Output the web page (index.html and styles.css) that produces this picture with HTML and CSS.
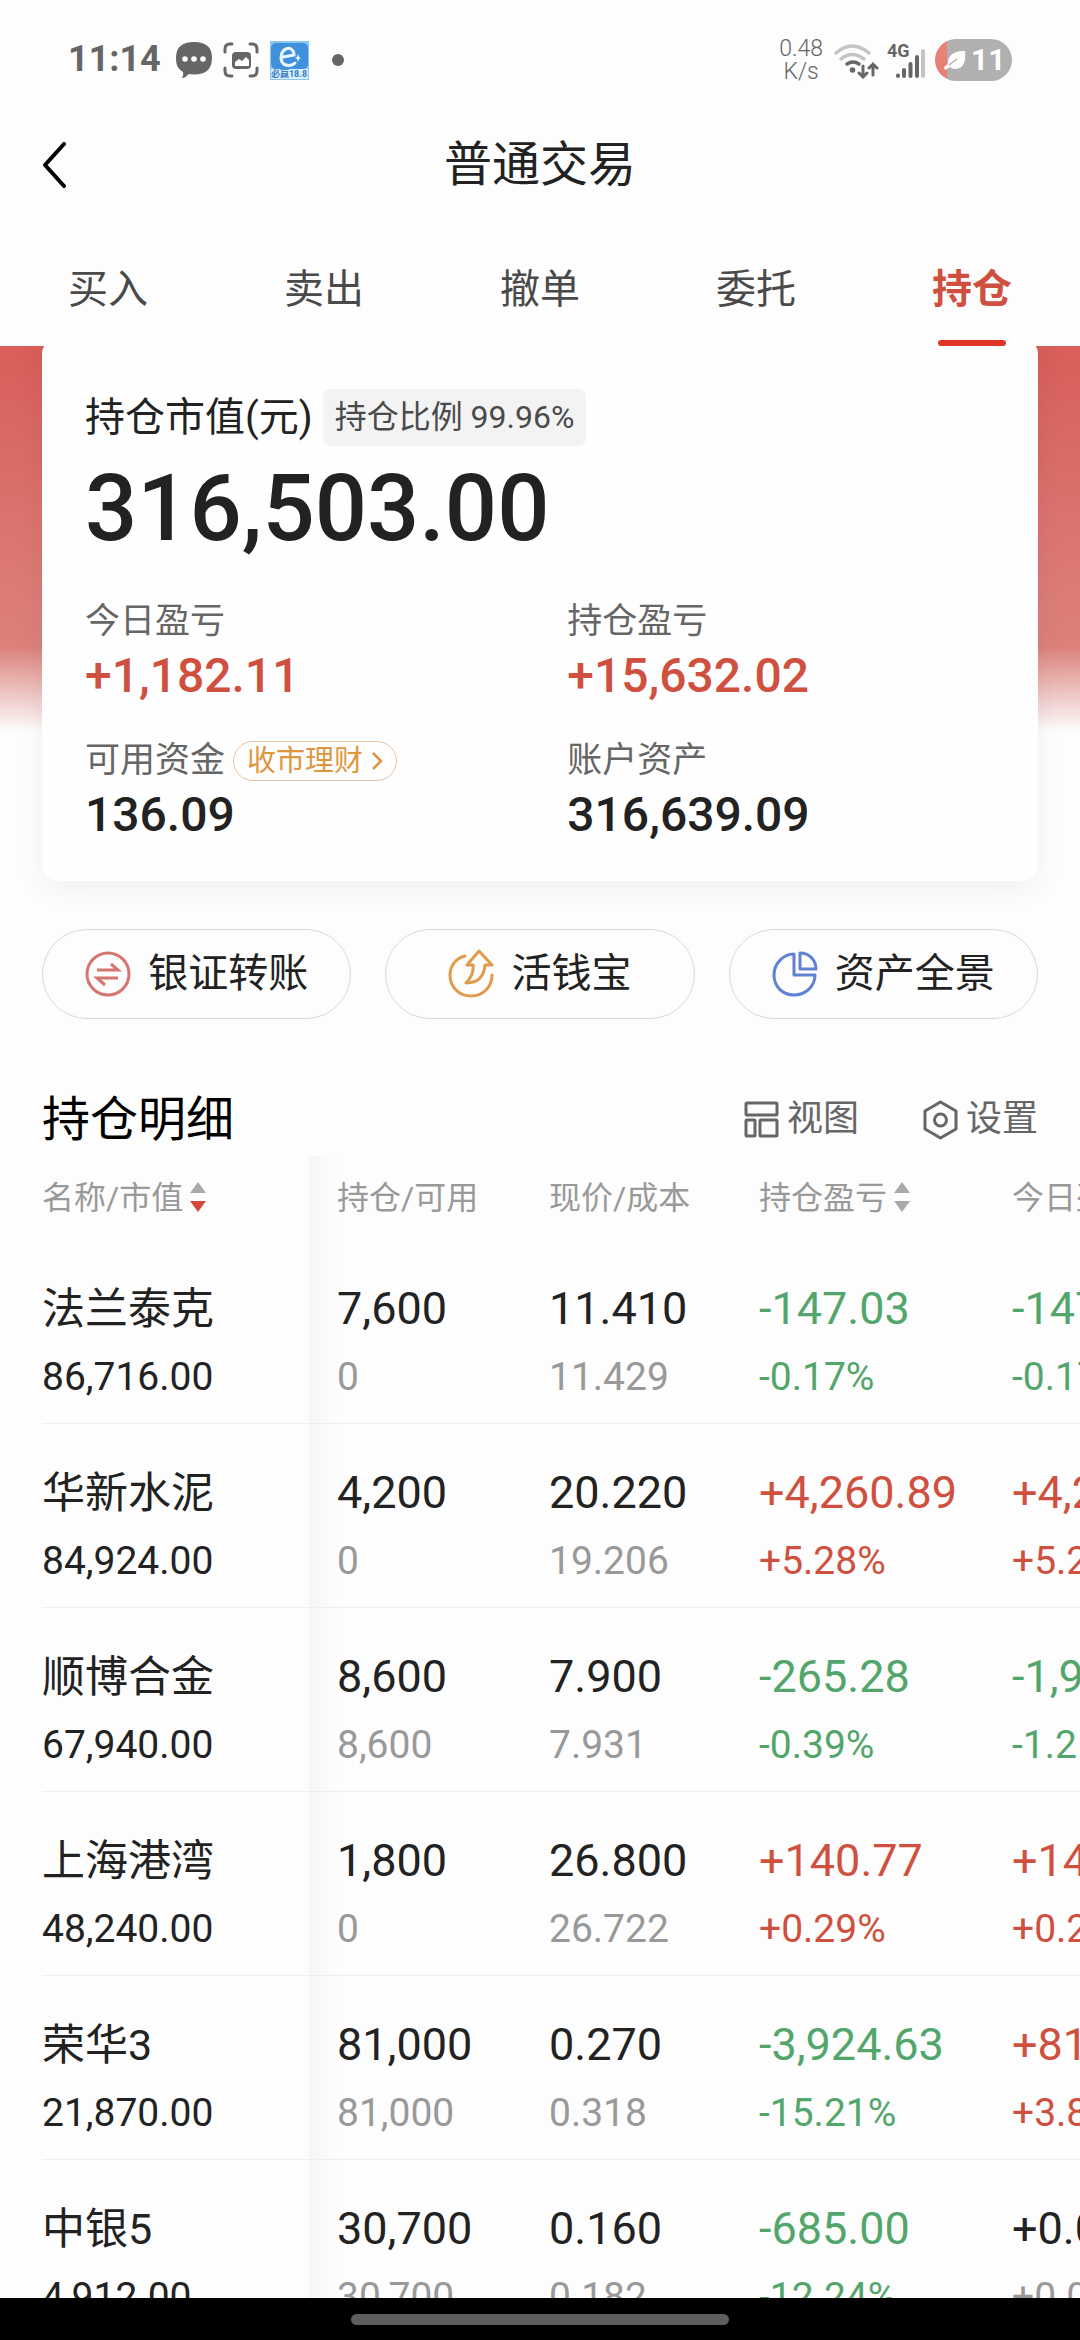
FILE: index.html
```html
<!DOCTYPE html>
<html lang="zh-CN">
<head>
  <meta charset="UTF-8">
  <meta name="viewport" content="width=device-width, initial-scale=1">
  <title>普通交易</title>
  <link rel="stylesheet" href="styles.css">
</head>
<body>
  <div class="status-bar">
    <div class="status-left">
      <span class="time">11:14</span>
      <svg class="status-icon" width="36" height="38" viewBox="0 0 36 38">
        <path fill="#666" d="M18 1C30 1 36 6 36 17S30 33.500 18 33.500c-2 0-4-.2-5.500-.5C11 35 9 37 6 37c1-1.500 1.500-4 1-6C2 28 0 24 0 17 0 6 6 1 18 1z"/>
        <g fill="#fff"><circle cx="9" cy="18" r="2.800"/><circle cx="18" cy="18" r="2.800"/><circle cx="27" cy="18" r="2.800"/></g>
      </svg>
      <svg class="status-icon" width="36" height="38" viewBox="0 0 36 38">
        <path fill="none" stroke="#666" stroke-width="3" stroke-linecap="round" d="M2 11V8q0-5 5-5h2M27 3h2q5 0 5 5v3M34 27v3q0 5-5 5h-2M9 35H7q-5 0-5-5v-3"/>
        <rect x="9" y="11" width="19" height="17" rx="4" fill="#666"/>
        <path fill="#fff" d="M12 25v-4l4-3 3 2 4-4 3 3v6z"/>
      </svg>
      <svg class="status-icon app" width="39" height="39" viewBox="0 0 39 39">
        <rect width="39" height="39" fill="#8cc6f3"/>
        <rect x="1" y="2" width="37" height="26" rx="5" fill="#3f90dd"/>
        <path d="M1 28h37v10H1z" fill="#d9effc"/>
        <path d="M13 16l11-2c0-5-4-8-8-6-5 2-6 9-4 13 3 5 10 4 13 1" fill="none" stroke="#e8f6ff" stroke-width="3" stroke-linecap="round"/>
        <path d="M28 13l1 3 2 1-2 1-1 3-1-3-2-1 2-1z" fill="#e8f6ff"/>
        <text x="19" y="36" text-anchor="middle" class="app-label">必赢18.8</text>
      </svg>
      <span class="dot"></span>
    </div>
    <div class="status-right">
      <div class="speed">0.48<br>K/s</div>
      <svg width="46" height="38" viewBox="0 0 46 38">
        <g fill="none" stroke-width="3.500" stroke-linecap="round">
          <path stroke="#c4c4c4" d="M3 12q16-14 33 0M8 18q11-9 23 0"/>
          <path stroke="#666" d="M14 23q6-4 12 0"/>
          <path stroke="#666" stroke-width="3" d="M30 25v10M26 32l4 4 4-4M40 34V23M36 27l4-4 4 4"/>
        </g>
        <circle cx="19.500" cy="29" r="2.800" fill="#666"/>
      </svg>
      <svg width="40" height="38" viewBox="0 0 40 38">
        <text x="0" y="16" class="net-label">4G</text>
        <g stroke="#666" stroke-width="4" stroke-linecap="round">
          <path d="M11 34.500v.5M17 29v6M23.500 23v12M30 16v19"/>
          <path stroke="#c4c4c4" d="M36 10v25"/>
        </g>
      </svg>
      <div class="battery">
        <svg width="22" height="22" viewBox="0 0 22 22">
          <path fill="#fff" d="M21 2c1 10-1 17-9 18-3 0-5-1-6-2l-5 3-1-3 4-3C3 7 10 1 21 2z"/>
          <path stroke="#b0b0b0" stroke-width="1.500" d="M5 16l8-6" fill="none"/>
        </svg>
        <span>11</span>
      </div>
    </div>
  </div>

  <header class="title-bar">
    <button class="back" aria-label="返回">
      <svg width="24" height="46" viewBox="0 0 24 46"><path d="M22 2L3 23l19 21" fill="none" stroke="#000" stroke-width="4" stroke-linecap="round" stroke-linejoin="round"/></svg>
    </button>
    <h1>普通交易</h1>
  </header>

  <nav class="tabs">
    <a href="#buy">买入</a>
    <a href="#sell">卖出</a>
    <a href="#cancel">撤单</a>
    <a href="#orders">委托</a>
    <a href="#positions" class="active">持仓</a>
  </nav>

  <main>
    <section class="hero">
      <div class="card">
        <div class="card-head">
          <span class="card-label">持仓市值(元)</span>
          <span class="ratio">持仓比例 99.96%</span>
        </div>
        <div class="total">316,503.00</div>
        <div class="stats">
          <div>
            <div class="stat-label">今日盈亏</div>
            <div class="stat-value up">+1,182.11</div>
          </div>
          <div>
            <div class="stat-label">持仓盈亏</div>
            <div class="stat-value up">+15,632.02</div>
          </div>
          <div>
            <div class="stat-label">可用资金
              <button class="chip">收市理财
                <svg width="12" height="20" viewBox="0 0 12 20"><path d="M2 2l8 8-8 8" fill="none" stroke="#e0963f" stroke-width="2.500"/></svg>
              </button>
            </div>
            <div class="stat-value">136.09</div>
          </div>
          <div>
            <div class="stat-label">账户资产</div>
            <div class="stat-value">316,639.09</div>
          </div>
        </div>
      </div>
    </section>

    <div class="actions">
      <button>
        <svg width="46" height="46" viewBox="0 0 46 46" fill="none" stroke="#d4756f" stroke-width="3">
          <circle cx="23" cy="23" r="21"/>
          <path d="M12 19h21l-7-6M33 27H12l8 7"/>
        </svg>
        银证转账
      </button>
      <button>
        <svg width="46" height="50" viewBox="0 0 46 50" fill="none" stroke="#e09a4a" stroke-width="3" stroke-linecap="round" stroke-linejoin="round">
          <path d="M17 7C8 9 2 17 2 26c0 12 9 21 21 21s21-9 21-21"/>
          <path d="M31 2L19 16h6c1 8-2 13-7 18 11 0 18-6 19-18h7z"/>
        </svg>
        活钱宝
      </button>
      <button>
        <svg width="46" height="46" viewBox="0 0 46 46" fill="none" stroke="#5f82d3" stroke-width="3" stroke-linejoin="round">
          <path d="M22 3v21h21c0 11-9 20-21 20S2 35 2 24 11 3 22 3z"/>
          <path d="M28 2v16h16C44 9 37 2 28 2z"/>
        </svg>
        资产全景
      </button>
    </div>

    <div class="list-head">
      <h2>持仓明细</h2>
      <div class="tools">
        <button>
          <svg width="35" height="37" viewBox="0 0 35 37" fill="none" stroke="#666" stroke-width="3">
            <rect x="2" y="2" width="31" height="12" rx="1"/>
            <rect x="2" y="19" width="9" height="16" rx="1"/>
            <rect x="16" y="19" width="17" height="16" rx="1"/>
          </svg>
          视图
        </button>
        <button>
          <svg width="35" height="40" viewBox="0 0 35 40" fill="none" stroke="#666" stroke-width="3" stroke-linejoin="round">
            <path d="M17.500 2L33 11v18l-15.500 9L2 29V11z"/>
            <circle cx="17.500" cy="20" r="6"/>
          </svg>
          设置
        </button>
      </div>
    </div>

    <div class="table-wrap">
      <table>
        <colgroup>
          <col class="col-name"><col class="col-hold"><col class="col-price"><col class="col-profit"><col class="col-today">
        </colgroup>
        <thead>
          <tr>
            <th>名称/市值<svg class="sort desc" width="16" height="30" viewBox="0 0 16 30"><path d="M8 0l8 11H0z"/><path d="M8 30l8-11H0z"/></svg></th>
            <th>持仓/可用</th>
            <th>现价/成本</th>
            <th>持仓盈亏<svg class="sort" width="16" height="30" viewBox="0 0 16 30"><path d="M8 0l8 11H0z"/><path d="M8 30l8-11H0z"/></svg></th>
            <th>今日盈亏</th>
          </tr>
        </thead>
        <tbody>
          <tr>
            <td><b>法兰泰克</b><i>86,716.00</i></td>
            <td><b>7,600</b><i>0</i></td>
            <td><b>11.410</b><i>11.429</i></td>
            <td class="down"><b>-147.03</b><i>-0.17%</i></td>
            <td class="down"><b>-147.03</b><i>-0.17%</i></td>
          </tr>
          <tr>
            <td><b>华新水泥</b><i>84,924.00</i></td>
            <td><b>4,200</b><i>0</i></td>
            <td><b>20.220</b><i>19.206</i></td>
            <td class="up"><b>+4,260.89</b><i>+5.28%</i></td>
            <td class="up"><b>+4,260.89</b><i>+5.28%</i></td>
          </tr>
          <tr>
            <td><b>顺博合金</b><i>67,940.00</i></td>
            <td><b>8,600</b><i>8,600</i></td>
            <td><b>7.900</b><i>7.931</i></td>
            <td class="down"><b>-265.28</b><i>-0.39%</i></td>
            <td class="down"><b>-1,978.00</b><i>-1.25%</i></td>
          </tr>
          <tr>
            <td><b>上海港湾</b><i>48,240.00</i></td>
            <td><b>1,800</b><i>0</i></td>
            <td><b>26.800</b><i>26.722</i></td>
            <td class="up"><b>+140.77</b><i>+0.29%</i></td>
            <td class="up"><b>+140.77</b><i>+0.29%</i></td>
          </tr>
          <tr>
            <td><b>荣华3</b><i>21,870.00</i></td>
            <td><b>81,000</b><i>81,000</i></td>
            <td><b>0.270</b><i>0.318</i></td>
            <td class="down"><b>-3,924.63</b><i>-15.21%</i></td>
            <td class="up"><b>+810.00</b><i>+3.85%</i></td>
          </tr>
          <tr>
            <td><b>中银5</b><i>4,912.00</i></td>
            <td><b>30,700</b><i>30,700</i></td>
            <td><b>0.160</b><i>0.182</i></td>
            <td class="down"><b>-685.00</b><i>-12.24%</i></td>
            <td><b>+0.00</b><i>+0.00%</i></td>
          </tr>
        </tbody>
      </table>
    </div>
  </main>

  <div class="home-bar"><span></span></div>
</body>
</html>
```

FILE: styles.css
```css
* {
  margin: 0;
  padding: 0;
  box-sizing: border-box;
}

body {
  display: flex;
  flex-direction: column;
  height: 100vh;
  overflow: hidden;
  background-color: #fdfdfd;
  color: #222;
  font-family: Roboto, "Noto Sans CJK SC", sans-serif;
  line-height: 1.2;
}

button {
  border: none;
  background: none;
  color: inherit;
  font-family: inherit;
  line-height: inherit;
  cursor: pointer;
}

svg {
  flex-shrink: 0;
}

.up { color: #d0503f; }
.down { color: #53a66b; }

/* status bar */
.status-bar {
  display: flex;
  justify-content: space-between;
  align-items: center;
  height: 120px;
  padding: 0 68px;
  color: #666;
}

.status-left,
.status-right {
  display: flex;
  align-items: center;
}

.status-left { gap: 11px; }
.status-right { gap: 8px; }

.time {
  margin-right: 4px;
  font-size: 36px;
  font-weight: 700;
}

.app-label {
  fill: #3a7fc4;
  font-size: 9px;
  font-weight: 700;
}

.dot {
  width: 12px;
  height: 12px;
  margin-left: 12px;
  border-radius: 50%;
  background-color: #666;
}

.speed {
  margin-right: 2px;
  font-size: 23px;
  line-height: 23px;
  font-weight: 300;
  text-align: center;
}

.net-label {
  fill: #666;
  font-size: 18px;
  font-weight: 700;
}

.battery {
  display: flex;
  align-items: center;
  gap: 5px;
  width: 77px;
  height: 42px;
  padding-left: 9px;
  border-radius: 21px;
  background: linear-gradient(to right, #e88075 12px, #b0b0b0 12px);
  color: #fff;
  font-size: 30px;
  font-weight: 700;
}

/* title */
.title-bar {
  display: grid;
  grid-template-columns: 1fr auto 1fr;
  align-items: center;
  height: 90px;
  padding: 0 42px;
}

.back {
  justify-self: start;
  height: 46px;
}

.title-bar h1 {
  font-size: 48px;
  font-weight: 400;
}

.tabs {
  display: flex;
  height: 136px;
}

.tabs a {
  flex: 1;
  display: flex;
  flex-direction: column;
  align-items: center;
  padding-top: 50px;
  color: #4a4a4a;
  font-size: 40px;
  line-height: 60px;
  text-decoration: none;
}

.tabs .active {
  color: #d0503f;
  font-weight: 700;
}

.tabs .active::after {
  content: "";
  width: 68px;
  height: 6px;
  margin-top: 20px;
  border-radius: 3px;
  background-color: #e03525;
}

main {
  flex: 1;
  overflow: hidden;
}

/* summary card */
.hero {
  padding: 0 42px 48px;
  overflow: hidden;
  background: linear-gradient(#d85e59, #dc7b76 240px, #dc807a 300px, #fdfdfd 386px) no-repeat;
}

.card {
  margin-top: -8px;
  padding: 51px 43px 38px;
  border-radius: 16px;
  background-color: #fefefe;
  box-shadow: 0 6px 30px rgba(0, 0, 0, 0.06);
}

.card-head {
  display: flex;
  align-items: center;
  gap: 10px;
}

.card-label {
  font-size: 40px;
}

.ratio {
  padding: 0 12px;
  border-radius: 8px;
  background-color: #f3f3f3;
  color: #4a4a4a;
  font-size: 32px;
  line-height: 57px;
}

.total {
  margin: 13px 0 37px;
  font-size: 92px;
  line-height: 100px;
  font-weight: 500;
}

.stats {
  display: grid;
  grid-template-columns: 53% 47%;
  row-gap: 31px;
}

.stat-label {
  display: flex;
  align-items: center;
  gap: 8px;
  height: 52px;
  color: #666;
  font-size: 35px;
}

.stat-value {
  font-size: 48px;
  line-height: 56px;
  font-weight: 500;
}

.chip {
  display: flex;
  align-items: center;
  gap: 8px;
  height: 40px;
  padding: 0 13px;
  border: 1px solid #e9c3a2;
  border-radius: 20px;
  color: #e0963f;
  font-size: 29px;
}

/* shortcuts */
.actions {
  display: flex;
  gap: 34px;
  padding: 0 42px;
}

.actions button {
  flex: 1;
  display: flex;
  justify-content: center;
  align-items: center;
  gap: 17px;
  height: 90px;
  border: 1px solid #d8d8d8;
  border-radius: 45px;
  font-size: 40px;
}

.list-head {
  display: flex;
  justify-content: space-between;
  align-items: center;
  height: 73px;
  margin: 64px 42px 0;
}

.list-head h2 {
  color: #000;
  font-size: 48px;
  font-weight: 400;
}

.tools {
  display: flex;
  gap: 64px;
}

.tools button {
  display: flex;
  align-items: center;
  gap: 8px;
  color: #666;
  font-size: 36px;
}

/* positions table */
.table-wrap {
  padding-left: 42px;
  overflow: hidden;
}

table {
  width: 1220px;
  table-layout: fixed;
  border-spacing: 0;
  white-space: nowrap;
  text-align: left;
}

.col-name { width: 267px; }
.col-hold { width: 240px; }
.col-price { width: 210px; }
.col-profit { width: 253px; }

th {
  height: 84px;
  color: #999;
  font-size: 32px;
  font-weight: 400;
}

td {
  padding: 35px 0 12px;
  border-bottom: 1px solid #eee;
}

th:nth-child(2),
td:nth-child(2) {
  padding-left: 28px;
  background: linear-gradient(to right, #f6f6f6, #fdfdfd 28px);
}

td b,
td i {
  display: block;
  line-height: 68px;
  font-weight: 400;
  font-style: normal;
}

td b { font-size: 45px; }
td i { font-size: 39px; }

td:first-child b { font-size: 43px; }

td:not(:first-child):not(.up):not(.down) i {
  color: #999;
}

.sort {
  margin-left: 7px;
  vertical-align: -3px;
  fill: #aaa;
}

.desc path:last-child {
  fill: #d5483c;
}

.home-bar {
  display: flex;
  justify-content: center;
  align-items: center;
  height: 42px;
  background-color: #000;
}

.home-bar span {
  width: 35%;
  height: 11px;
  border-radius: 6px;
  background-color: #5e5e5e;
}
```
